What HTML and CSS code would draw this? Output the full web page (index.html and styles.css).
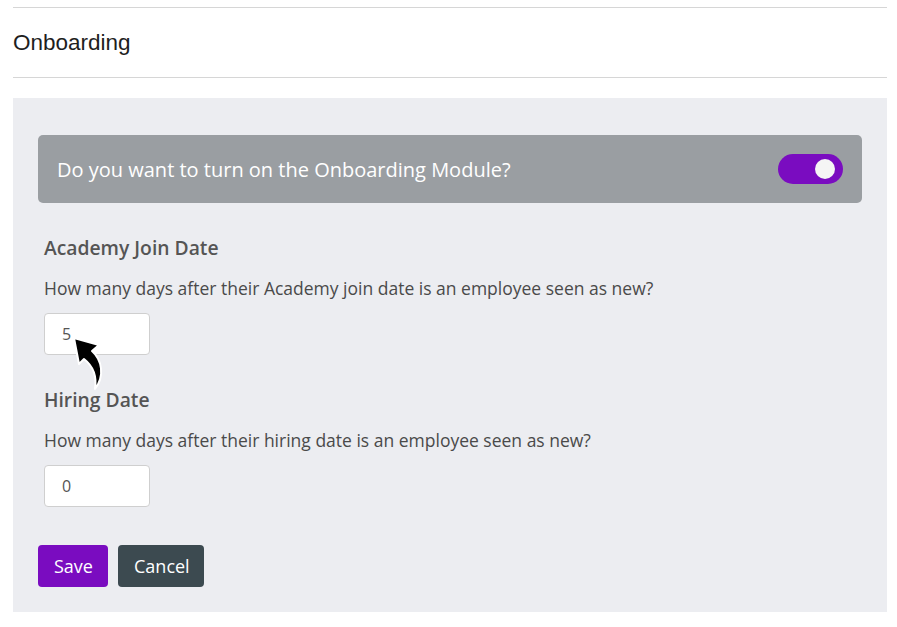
FILE: index.html
```html
<!DOCTYPE html>
<html>
<head>
<meta charset="utf-8">
<link rel="stylesheet" href="styles.css">
</head>
<body>
<div class="page">
  <div class="title-bar">
    <h1 class="title">Onboarding</h1>
  </div>
  <div class="panel">
    <div class="banner">
      <span class="banner-text">Do you want to turn on the Onboarding Module?</span>
      <span class="toggle"><span class="knob"></span></span>
    </div>
    <div class="section">
      <h2 class="section-title">Academy Join Date</h2>
      <p class="section-desc">How many days after their Academy join date is an employee seen as new?</p>
      <div class="input-wrap">
        <input class="num-input" type="text" value="5">
        <svg class="arrow" width="40" height="60" viewBox="0 0 40 60">
          <path d="M4 5 L29 12 L22 18 C32 27 35 43 25 56 C27 43 23 33 14 26 L9 31 Z" fill="#000" stroke="#fff" stroke-width="2" stroke-linejoin="round"/>
        </svg>
      </div>
    </div>
    <div class="section">
      <h2 class="section-title">Hiring Date</h2>
      <p class="section-desc">How many days after their hiring date is an employee seen as new?</p>
      <div class="input-wrap">
        <input class="num-input" type="text" value="0">
      </div>
    </div>
    <div class="actions">
      <button class="btn btn-save">Save</button>
      <button class="btn btn-cancel">Cancel</button>
    </div>
  </div>
</div>
</body>
</html>
```

FILE: styles.css
```css
html, body {
  margin: 0;
  padding: 0;
  background: #fff;
}
.page {
  padding: 7px 10px 0 13px;
}
.title-bar {
  border-top: 1px solid #d6d6d6;
  border-bottom: 1px solid #d6d6d6;
  height: 69px;
  display: flex;
  align-items: center;
}
.title {
  margin: 0;
  font-family: "Liberation Sans", Arial, sans-serif;
  font-weight: normal;
  font-size: 22.5px;
  color: #1e1e1e;
  padding-top: 1px;
}
.panel {
  margin-top: 20px;
  background: #ecedf1;
  padding: 37px 25px 25px 25px;
  font-family: "Open Sans", sans-serif;
}
.banner {
  background: #9a9ea2;
  border-radius: 5px;
  height: 68px;
  padding: 0 19px;
  display: flex;
  align-items: center;
  justify-content: space-between;
}
.banner-text {
  color: #fff;
  font-size: 20px;
}
.toggle {
  width: 65px;
  height: 30px;
  border-radius: 15px;
  background: #7a0cc0;
  display: flex;
  align-items: center;
  justify-content: flex-end;
  padding-right: 8px;
  box-sizing: border-box;
}
.knob {
  width: 20px;
  height: 20px;
  border-radius: 50%;
  background: #f5f5f5;
}
.section {
  padding-left: 6px;
}
.section-title {
  margin: 31px 0 0 0;
  font-size: 19.3px;
  font-weight: 600;
  color: #555;
  line-height: 28px;
}
.section-desc {
  margin: 14px 0 0 0;
  font-size: 17.5px;
  font-weight: 500;
  color: #4a4a4a;
  line-height: 24px;
}
.input-wrap {
  position: relative;
  margin-top: 13px;
  width: 106px;
}
.num-input {
  display: block;
  width: 106px;
  height: 42px;
  box-sizing: border-box;
  border: 1px solid #cfcfcf;
  border-radius: 4px;
  background: #fff;
  padding: 0 17px;
  font-family: "Open Sans", sans-serif;
  font-size: 16px;
  color: #555;
}
.arrow {
  position: absolute;
  left: 26px;
  top: 20px;
}
.actions {
  margin-top: 38px;
  display: flex;
  gap: 10px;
}
.btn {
  height: 42px;
  border: none;
  border-radius: 4px;
  font-family: "Open Sans", sans-serif;
  font-size: 18px;
  color: #fff;
  padding: 0 16px;
}
.btn-save {
  background: #7a0cc0;
  width: 70px;
}
.btn-cancel {
  background: #3c4a50;
  width: 86px;
}
```
